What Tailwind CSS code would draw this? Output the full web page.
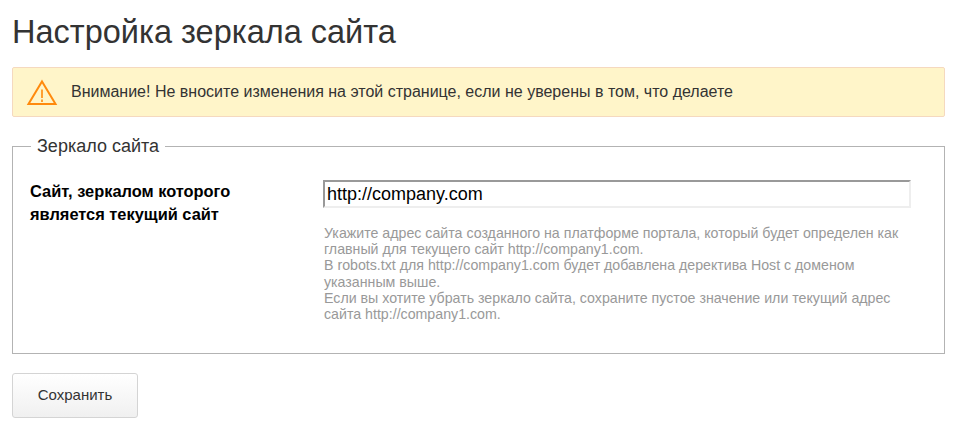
<!DOCTYPE html>
<html lang="ru">
<head>
    <meta charset="UTF-8">
    <title>Настройка зеркала сайта</title>
    <script src="https://cdn.jsdelivr.net/npm/@tailwindcss/browser@4"></script>
</head>
<body class="bg-white font-['Liberation_Sans',Arial,sans-serif] overflow-hidden">
    <div class="pl-[12px] pr-[13px] w-[958px]">
        <h1 class="pt-[12px] h-[67px] text-[32.5px] leading-[40px] text-[#333333] font-normal">Настройка зеркала сайта</h1>

        <div class="flex items-center h-[50px] bg-[#fff5c9] border border-[#f5d9bf] rounded-[2px] pl-[13px] text-[16px] text-[#333333]">
            <svg class="w-[32px] h-[28px] mr-[13px]" viewBox="0 0 32 28" fill="none">
                <path d="M16 3.5 L29.5 26 H2.5 Z" stroke="#ff8a0d" stroke-width="2" stroke-linejoin="miter"/>
                <path d="M16 11.5 V20" stroke="#ff8a0d" stroke-width="1.6"/>
                <path d="M16 21.5 V24" stroke="#ff8a0d" stroke-width="1.6"/>
            </svg>
            <span>Внимание! Не вносите изменения на этой странице, если не уверены в том, что делаете</span>
        </div>

        <fieldset class="mt-[18px] h-[219px] border border-[#b3b3b3] px-[18px]">
            <legend class="px-[6px] text-[18px] leading-[22px] text-[#333333]">Зеркало сайта</legend>
            <div class="flex pt-[23px]">
                <label class="w-[293px] shrink-0 -ml-[1px] text-[16.4px] leading-[23px] font-bold text-black">Сайт, зеркалом которого<br>является текущий сайт</label>
                <div class="w-[588px]">
                    <input type="text" value="http://company.com" class="block w-full h-[28px] px-[2px] text-[18px] text-black border-2 border-t-[#999999] border-l-[#999999] border-r-[#eeeeee] border-b-[#eeeeee] outline-none">
                    <p class="mt-[17px] pl-[1px] pr-[1px] text-[14.2px] leading-[16.2px] text-[#999999]">Укажите адрес сайта созданного на платформе портала, который будет определен как главный для текущего сайт http://company1.com.<br>В robots.txt для http://company1.com будет добавлена деректива Host с доменом указанным выше.<br>Если вы хотите убрать зеркало сайта, сохраните пустое значение или текущий адрес сайта http://company1.com.</p>
                </div>
            </div>
        </fieldset>

        <button class="block mt-[19px] w-[126px] h-[45px] rounded-[3px] border border-[#d4d4d4] bg-gradient-to-b from-white to-[#f0f0f0] text-[15px] text-[#333333]">Сохранить</button>
    </div>
</body>
</html>
